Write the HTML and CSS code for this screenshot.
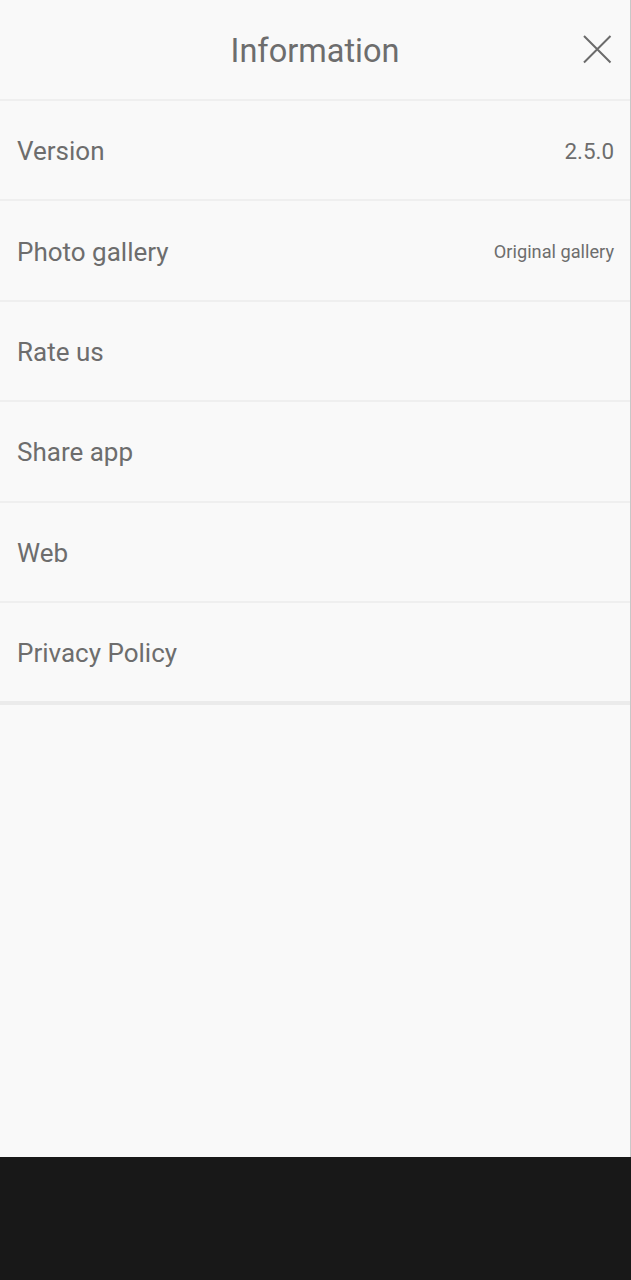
FILE: index.html
```html
<!DOCTYPE html>
<html lang="en">
<head>
    <meta charset="UTF-8">
    <meta name="viewport" content="width=device-width, initial-scale=1.0">
    <title>Information</title>
    <link rel="stylesheet" href="styles.css">
</head>
<body>
    <div id="screen">
        <div id="header">
            <h1>Information</h1>
            <button class="closeBtn" aria-label="Close">
                <svg width="30" height="30" viewBox="0 0 30 30">
                    <path d="M2 2 L28.5 28.5 M28.5 2 L2 28.5" stroke="#6b6b6b" stroke-width="2" fill="none"/>
                </svg>
            </button>
        </div>
        <div id="menuList">
            <div class="menuRow">
                <span class="label">Version</span>
                <span class="value">2.5.0</span>
            </div>
            <div class="menuRow">
                <span class="label">Photo gallery</span>
                <span class="value small">Original gallery</span>
            </div>
            <div class="menuRow">
                <span class="label">Rate us</span>
            </div>
            <div class="menuRow">
                <span class="label">Share app</span>
            </div>
            <div class="menuRow">
                <span class="label">Web</span>
            </div>
            <div class="menuRow last">
                <span class="label">Privacy Policy</span>
            </div>
        </div>
        <div id="filler"></div>
    </div>
    <div id="navBar"></div>
</body>
</html>
```

FILE: styles.css
```css
body {
    margin: 0;
    font-family: Roboto, 'Noto Sans', Arial, sans-serif;
    background-color: #f9f9f9;
    color: #666;
}
#screen {
    height: 1157px;
    display: flex;
    flex-direction: column;
    border-right: 1px solid #c8c8c8;
    box-sizing: border-box;
}
#header {
    height: 99px;
    display: flex;
    align-items: center;
    justify-content: center;
    position: relative;
    border-bottom: 2px solid #efefef;
    flex-shrink: 0;
}
#header h1 {
    margin: 0;
    padding-top: 3px;
    font-size: 32.5px;
    font-weight: 400;
    color: #6d6d6d;
}
.closeBtn {
    position: absolute;
    right: 18px;
    top: 34px;
    background: none;
    border: none;
    padding: 0;
    width: 30px;
    height: 30px;
    cursor: pointer;
}
.closeBtn svg {
    display: block;
}
.menuRow {
    display: flex;
    align-items: center;
    justify-content: space-between;
    padding: 2px 16px 0 17px;
    border-bottom: 2px solid #efefef;
    height: 96.4px;
}
.menuRow.last {
    border-bottom: 4px solid #ebebeb;
}
.label {
    font-size: 26px;
    color: #6d6d6d;
}
.value {
    font-size: 22.4px;
    color: #6d6d6d;
}
.value.small {
    font-size: 18.2px;
}
#filler {
    flex: 1;
}
#navBar {
    height: 123px;
    background-color: #181818;
}
```
